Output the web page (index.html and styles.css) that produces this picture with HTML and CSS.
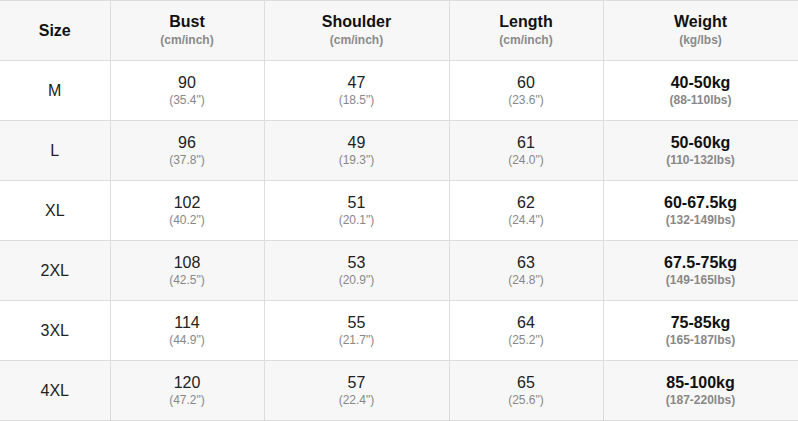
FILE: index.html
```html
<!DOCTYPE html>
<html>
<head>
<meta charset="utf-8">
<link rel="stylesheet" href="styles.css">
</head>
<body>
<table class="size-table">
  <colgroup>
    <col class="c-size"><col class="c-bust"><col class="c-shoulder"><col class="c-length"><col class="c-weight">
  </colgroup>
  <thead>
    <tr>
      <th class="first"><span class="main">Size</span></th>
      <th><span class="main">Bust</span><span class="sub">(cm/inch)</span></th>
      <th><span class="main">Shoulder</span><span class="sub">(cm/inch)</span></th>
      <th><span class="main">Length</span><span class="sub">(cm/inch)</span></th>
      <th><span class="main">Weight</span><span class="sub">(kg/lbs)</span></th>
    </tr>
  </thead>
  <tbody>
    <tr>
      <td class="first">M</td>
      <td><span class="val">90</span><span class="sub">(35.4")</span></td>
      <td><span class="val">47</span><span class="sub">(18.5")</span></td>
      <td><span class="val">60</span><span class="sub">(23.6")</span></td>
      <td class="weight"><span class="val">40-50kg</span><span class="sub">(88-110lbs)</span></td>
    </tr>
    <tr class="alt">
      <td class="first">L</td>
      <td><span class="val">96</span><span class="sub">(37.8")</span></td>
      <td><span class="val">49</span><span class="sub">(19.3")</span></td>
      <td><span class="val">61</span><span class="sub">(24.0")</span></td>
      <td class="weight"><span class="val">50-60kg</span><span class="sub">(110-132lbs)</span></td>
    </tr>
    <tr>
      <td class="first">XL</td>
      <td><span class="val">102</span><span class="sub">(40.2")</span></td>
      <td><span class="val">51</span><span class="sub">(20.1")</span></td>
      <td><span class="val">62</span><span class="sub">(24.4")</span></td>
      <td class="weight"><span class="val">60-67.5kg</span><span class="sub">(132-149lbs)</span></td>
    </tr>
    <tr class="alt">
      <td class="first">2XL</td>
      <td><span class="val">108</span><span class="sub">(42.5")</span></td>
      <td><span class="val">53</span><span class="sub">(20.9")</span></td>
      <td><span class="val">63</span><span class="sub">(24.8")</span></td>
      <td class="weight"><span class="val">67.5-75kg</span><span class="sub">(149-165lbs)</span></td>
    </tr>
    <tr>
      <td class="first">3XL</td>
      <td><span class="val">114</span><span class="sub">(44.9")</span></td>
      <td><span class="val">55</span><span class="sub">(21.7")</span></td>
      <td><span class="val">64</span><span class="sub">(25.2")</span></td>
      <td class="weight"><span class="val">75-85kg</span><span class="sub">(165-187lbs)</span></td>
    </tr>
    <tr class="alt">
      <td class="first">4XL</td>
      <td><span class="val">120</span><span class="sub">(47.2")</span></td>
      <td><span class="val">57</span><span class="sub">(22.4")</span></td>
      <td><span class="val">65</span><span class="sub">(25.6")</span></td>
      <td class="weight"><span class="val">85-100kg</span><span class="sub">(187-220lbs)</span></td>
    </tr>
  </tbody>
</table>
</body>
</html>
```
FILE: styles.css
```css
html, body {
  margin: 0;
  padding: 0;
  background: #ffffff;
}
body {
  font-family: "Liberation Sans", Arial, sans-serif;
  color: #222;
}
.size-table {
  width: 798px;
  border-collapse: collapse;
  table-layout: fixed;
}
.c-size { width: 110px; }
.c-bust { width: 154px; }
.c-shoulder { width: 185px; }
.c-length { width: 154px; }
.c-weight { width: 195px; }
.size-table th,
.size-table td {
  height: 59px;
  padding: 0;
  border: 1px solid #dddddd;
  text-align: center;
  vertical-align: middle;
}
.size-table th.first,
.size-table td.first {
  border-left: none;
}
.size-table thead tr {
  background: #f7f7f7;
}
.size-table tr.alt {
  background: #f7f7f7;
}
.size-table th {
  font-weight: bold;
}
.main {
  display: block;
  font-size: 16px;
  line-height: 20px;
  color: #111;
}
.val {
  display: block;
  font-size: 16px;
  line-height: 19px;
  color: #222;
}
.sub {
  display: block;
  font-size: 12px;
  line-height: 17px;
  color: #888;
}
.size-table th .sub {
  font-weight: bold;
  color: #8a8a8a;
}
td.first {
  font-size: 16px;
  color: #222;
}
td.weight .val {
  font-weight: bold;
  color: #111;
}
td.weight .sub {
  font-weight: bold;
  color: #888;
}
```
